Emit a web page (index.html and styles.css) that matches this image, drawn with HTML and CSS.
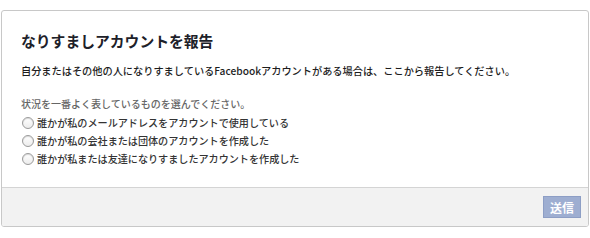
FILE: index.html
```html
<!DOCTYPE html>
<html lang="ja">
<head>
  <meta charset="UTF-8" />
  <title>なりすましアカウントを報告</title>
  <link rel="stylesheet" href="styles.css">
</head>
<body>

<div class="dialog">
  <div class="content">
    <h2 class="title">なりすましアカウントを報告</h2>
    <p class="desc">自分またはその他の人になりすましているFacebookアカウントがある場合は、ここから報告してください。</p>
    <p class="prompt">状況を一番よく表しているものを選んでください。</p>
    <label class="option"><span class="radio"></span>誰かが私のメールアドレスをアカウントで使用している</label>
    <label class="option"><span class="radio"></span>誰かが私の会社または団体のアカウントを作成した</label>
    <label class="option"><span class="radio"></span>誰かが私または友達になりすましたアカウントを作成した</label>
  </div>
  <div class="footer">
    <button class="send" disabled>送信</button>
  </div>
</div>

</body>
</html>
```

FILE: styles.css
```css
body {
  margin: 0;
  background: #fff;
  font-family: "Noto Sans CJK JP", "Noto Sans", sans-serif;
  color: #1d2129;
}
.dialog {
  margin: 10px 1px 0 1px;
  border: 1px solid #c8c8c8;
  border-radius: 3px;
  overflow: hidden;
}
.content {
  height: 176px;
  box-sizing: border-box;
  padding: 20px 19px 0;
}
.title {
  margin: 0;
  font-size: 14.8px;
  line-height: 20px;
  font-weight: bold;
  color: #1d2129;
}
.desc {
  margin: 12px 0 0;
  font-size: 10.2px;
  line-height: 16px;
  font-weight: 500;
  color: #1d1d1d;
}
.prompt {
  margin: 17px 0 0;
  font-size: 10px;
  line-height: 16px;
  font-weight: 500;
  color: #666;
}
.option {
  display: flex;
  align-items: center;
  font-size: 10.1px;
  line-height: 18px;
  font-weight: 500;
  color: #333;
}
.prompt + .option {
  margin-top: 2px;
}
.radio {
  width: 10px;
  height: 10px;
  border: 1px solid #9a9a9a;
  border-radius: 50%;
  margin: 0 3px 0 1px;
  background: linear-gradient(#fff, #ececec);
  box-shadow: inset 0 1px 1px rgba(0,0,0,0.15);
}
.footer {
  height: 39px;
  box-sizing: border-box;
  background: #f2f2f2;
  border-top: 1px solid #d4d4d4;
  display: flex;
  justify-content: flex-end;
  align-items: center;
  padding-right: 7px;
}
.send {
  width: 38px;
  height: 22px;
  padding: 0;
  background: #9eaed1;
  border: 1px solid #8d9ec5;
  color: #fff;
  font-family: inherit;
  font-weight: bold;
  font-size: 12px;
}
```
